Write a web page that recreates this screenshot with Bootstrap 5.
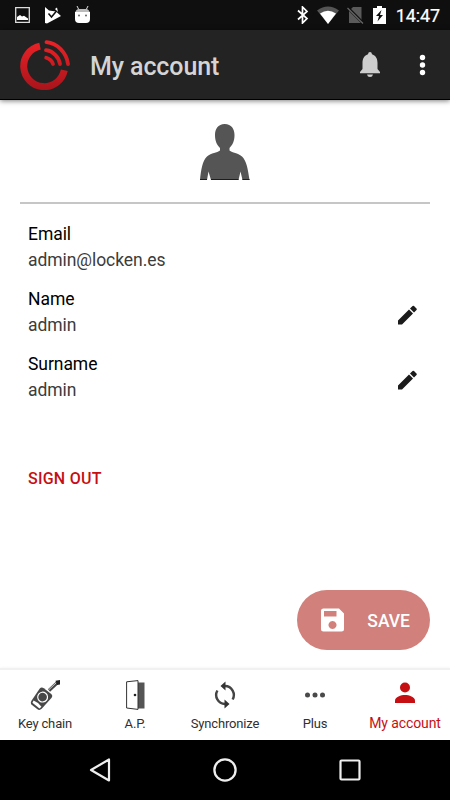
<!DOCTYPE html>
<html lang="en">
<head>
<meta charset="utf-8">
<meta name="viewport" content="width=device-width, initial-scale=1">
<title>My account</title>
<link href="https://cdn.jsdelivr.net/npm/bootstrap@5.3.0/dist/css/bootstrap.min.css" rel="stylesheet">
<style>
body { font-family: Roboto, "Liberation Sans", sans-serif; background: #fff; color: #000; }
svg { display: block; flex: none; }
.screen { width: 450px; height: 800px; }
.statusbar { height: 30px; background: #0f0f0f; padding: 0 10px 0 15px; }
.play-check { margin: 0 14px 0 15px; }
.battery { margin: 0 10px 0 9px; }
.clock { font-size: 18px; line-height: 30px; padding-top: 2px; letter-spacing: -.1px; -webkit-text-stroke: .2px #fff; }
.appbar { height: 70px; background: #232323; border-bottom: 1px solid #000; box-shadow: 0 1px 5px rgba(0,0,0,.5); padding: 0 17px 0 20px; }
.apptitle { font-size: 25px; font-weight: 500; color: #d4d4d4; line-height: 30px; padding-top: 5px; letter-spacing: -.1px; }
.bell { margin-right: 32px; }
.avatar { padding-top: 24px; height: 102px; margin: 0 20px; }
.rule { height: 2px; background: #c6c6c6; margin: 0 20px; }
.fields { padding: 17px 32px 0 28px; }
.field { height: 65px; font-size: 17.5px; line-height: 26px; letter-spacing: -.06px; }
.field:first-child { height: 64.500px; }
.field-value { color: #3c3c3c; }
.pencil { margin-top: 19.500px; }
.signout { font-size: 16px; line-height: 20px; font-weight: 500; color: #c60f13; padding: 0; border: 0; margin: 53px 0 0 28px; background: none; letter-spacing: .25px; }
.save { width: 133px; height: 60px; background: #d1807b; color: #fff; font-size: 17.5px; font-weight: 500; padding: 0 20px 0 23px; margin: 0 20px 18px 0; border: 0; }
.save span { padding-top: 2px; }
.tabs { height: 72px; border-top: 2px solid #f1f1f1; box-shadow: 0 -1px 2px rgba(0,0,0,.03); }
.tab-item { width: 90px; font-size: 13px; line-height: 16px; color: #303030; padding-top: 10px; letter-spacing: -.15px; }
.tab-item svg { margin-bottom: 6px; }
.tab-item.current { color: #c60f13; font-size: 14px; padding-top: 8px; letter-spacing: -.1px; }
.tab-item.current svg { margin-bottom: 7px; }
.sysnav { height: 60px; background: #000; padding: 0 75px; }
</style>
</head>
<body>
<div class="screen d-flex flex-column overflow-hidden">
  <header class="statusbar d-flex align-items-center text-white">
    <svg width="15" height="16" viewBox="0 0 15 16"><path d="M.7.7h13.6v14.6H.7z" fill="none" stroke="#ddd" stroke-width="1.3"/><path d="M2 13v-3l3-2 2 1.600 2-.8 4 2.700V13z" fill="#fff"/></svg>
    <svg class="play-check" width="16" height="17" viewBox="0 0 16 17"><path d="M0 0l4 3.500 7 1 5 4.500L2 16.500 0 16z" fill="#fff"/><path d="M10 2l2-1.500 1 4.500z" fill="#fff"/><path d="M3.500 6.500l3 3.500 5-6" fill="none" stroke="#0f0f0f" stroke-width="1.500"/></svg>
    <svg width="15" height="18" viewBox="0 0 15 18"><path d="M2 0l2 4M13 0l-2 4" stroke="#ddd" stroke-width="1"/><path d="M0 7Q1 3 4 3h7q3 0 4 4z" fill="#bbb"/><path d="M0 6h15v7q0 4-4 4H4q-4 0-4-4z" fill="#fff"/><circle cx="4" cy="9.500" r="1" fill="#666"/><circle cx="11" cy="9.500" r="1" fill="#666"/></svg>
    <div class="d-flex align-items-center ms-auto">
      <svg width="12" height="18" viewBox="0 0 12 18"><path d="M1 4.500l9 8-4.500 4.500V1L10 5.500l-9 8" fill="none" stroke="#fff" stroke-width="1.700"/></svg>
      <svg class="ms-2" width="22" height="18" viewBox="0 0 22 18"><path d="M0 4.500Q11-3.500 22 4.500L11 18z" fill="#555"/><path d="M3 7.500Q11 2 19 7.500L11 18z" fill="#fff"/></svg>
      <svg class="ms-2" width="17" height="18" viewBox="0 0 17 18"><path d="M2 5l4-4h8.500v16H2z" fill="#5a5a5a"/><path d="M-.5.500l17 17" stroke="#0f0f0f" stroke-width="3"/><path d="M.5 2l15.500 15.500" stroke="#666" stroke-width="1.300"/></svg>
      <svg class="battery" width="13" height="18" viewBox="0 0 13 18"><path d="M0 2h4V0h5v2h4v16H0z" fill="#fff"/><path d="M8.500 4L3 10h3l-1.500 5.500L10 9H7z" fill="#0f0f0f"/></svg>
      <span class="clock">14:47</span>
    </div>
  </header>

  <div class="appbar d-flex align-items-center flex-shrink-0">
    <svg width="50" height="50" viewBox="0 0 50 50"><defs><linearGradient id="red" gradientUnits="userSpaceOnUse" x1="0" y1="0" x2="0" y2="50"><stop offset="0" stop-color="#ed2227"/><stop offset="1" stop-color="#a8141b"/></linearGradient></defs><g fill="none" stroke="url(#red)"><path d="M20 6.100A20.500 20.500 0 1 0 44.300 30.300" stroke-width="7"/><g stroke-width="3.800" stroke-linecap="round"><path d="M26.500 2.200C37 3.200 46.500 12.500 48 24"/><path d="M26 10.200C33 11 39 17 40 24"/><path d="M26.200 17.800C29.500 18.800 32 21 33 24"/></g></g></svg>
    <div class="apptitle ms-3 ps-1">My account</div>
    <svg class="bell ms-auto" width="20" height="25" viewBox="0 0 20 25"><path d="M10 0q1.800 0 2 2.200C16.500 3.700 17.500 7.500 17.500 11v6l2.500 3v1.200H0V20l2.500-3v-6C2.500 7.500 3.500 3.700 8 2.200Q8.200 0 10 0zM7 22.500h6Q12.500 25 10 25t-3-2.500z" fill="#cecece"/></svg>
    <svg width="21" height="22" viewBox="0 0 21 22"><g fill="#fff"><circle cx="10.500" cy="3.500" r="2.700"/><circle cx="10.500" cy="11" r="2.700"/><circle cx="10.500" cy="18.500" r="2.700"/></g></svg>
  </div>

  <main class="flex-grow-1 d-flex flex-column">
    <div class="avatar d-flex justify-content-center">
      <svg width="50" height="57" viewBox="0 0 50 57"><path d="M24.700 0C31.500 0 34.500 5 34.500 11c0 6-2 10-5 13v2.500c3 2.500 8 2 12.500 6 4.500 4 6 13 7.500 23.500h-7l-2-8.500-2 8.500H11l-2.500-8.500L7 56H0C1 46 2.500 36.500 7 32.500c4.500-4 10-3.500 13-6V24c-3-3-5-7-5-13C15 5 18 0 24.700 0z" fill="#555"/><path d="M0 55.500h7m4 0h27.500m4 0h7" stroke="#1d1d1d"/></svg>
    </div>
    <div class="rule"></div>
    <div class="fields">
      <div class="field"><div>Email</div><div class="field-value">admin@locken.es</div></div>
      <div class="field d-flex justify-content-between"><div><div>Name</div><div class="field-value">admin</div></div>
        <svg class="pencil" width="20" height="20" viewBox="0 0 20 20"><path d="M0 15.500V19.500h4L15 8.500l-4-4zM12 3.500l4 4 2.500-2.500q.7-.7 0-1.400L16 1q-.7-.7-1.400 0z" fill="#1b1b1b"/></svg></div>
      <div class="field d-flex justify-content-between"><div><div>Surname</div><div class="field-value">admin</div></div>
        <svg class="pencil" width="20" height="20" viewBox="0 0 20 20"><path d="M0 15.500V19.500h4L15 8.500l-4-4zM12 3.500l4 4 2.500-2.500q.7-.7 0-1.400L16 1q-.7-.7-1.400 0z" fill="#1b1b1b"/></svg></div>
    </div>
    <button class="signout align-self-start text-uppercase">Sign out</button>
    <button class="save btn rounded-pill d-flex align-items-center justify-content-between align-self-end mt-auto">
      <svg width="25" height="24" viewBox="-.5 0 25 24"><path fill-rule="evenodd" d="M3 .5h15.500l5 5V21q0 2.500-2.500 2.500H3Q.5 23.500.5 21V3Q.5.500 3 .5zM3.500 3v5.500H16V3zM12 13a4 4 0 1 0 .01 0z" fill="#fff"/></svg>
      <span>SAVE</span>
    </button>
  </main>

  <nav class="tabs d-flex flex-shrink-0">
    <div class="tab-item d-flex flex-column align-items-center">
      <svg width="30" height="30" viewBox="0 0 30 30"><path d="M19 10.500l8-7.500" stroke="#484848" stroke-width="3.200"/><path d="M18.500 10l8-7.500" stroke="#eee" stroke-width=".8"/><path d="M25.500.8l4.500-.8v4.500l-3 .5z" fill="#222"/><g transform="rotate(38 10.500 19)"><path d="M6.500 8.500h9q3 0 3 3l-1 14.500q-.5 3-3 3h-7q-2.500 0-3-3l-1-14.500q0-3 3-3z" fill="#484848"/><circle cx="11" cy="16.200" r="4.900" fill="#484848" stroke="#fff" stroke-width="1.200"/><path d="M6 24.500q5-1.500 10 0l-.5 2.500h-9z" fill="#fff"/></g></svg>
      <span>Key chain</span>
    </div>
    <div class="tab-item d-flex flex-column align-items-center">
      <svg width="19" height="30" viewBox="0 0 19 30"><path d="M11 2.500h7.500v26H11z" fill="#555"/><path d="M.6 1.800L12 .6v28.800L.6 28z" fill="#fff" stroke="#333"/><circle cx="9" cy="15" r="1.300" fill="#222"/></svg>
      <span>A.P.</span>
    </div>
    <div class="tab-item d-flex flex-column align-items-center">
      <svg width="30" height="30" viewBox="0 0 30 30"><g fill="none" stroke="#444" stroke-width="2.400"><path d="M14 6h1a9 9 0 0 1 7.600 13.500"/><path d="M16 24h-1A9 9 0 0 1 7.400 10.500"/></g><path d="M15.500 1.500v9L10.500 6zM14.500 19.500v9l5-4.500z" fill="#333"/></svg>
      <span>Synchronize</span>
    </div>
    <div class="tab-item d-flex flex-column align-items-center">
      <svg width="30" height="30" viewBox="0 0 30 30"><g fill="#4a4a4a"><circle cx="7.500" cy="15" r="2.500"/><circle cx="15" cy="15" r="2.500"/><circle cx="22.500" cy="15" r="2.500"/></g></svg>
      <span>Plus</span>
    </div>
    <div class="tab-item current d-flex flex-column align-items-center">
      <svg width="30" height="30" viewBox="0 0 30 30"><g fill="#c60f13"><circle cx="15" cy="9.500" r="5"/><path d="M5 25v-2.500C5 19 11 17 15 17s10 2 10 5.500V25z"/></g></svg>
      <span>My account</span>
    </div>
  </nav>

  <footer class="sysnav d-flex align-items-center justify-content-between flex-shrink-0">
    <svg width="50" height="30" viewBox="0 0 50 30"><path d="M34 4.500v21L16 15z" fill="none" stroke="#eee" stroke-width="2.200" stroke-linejoin="round"/></svg>
    <svg width="50" height="30" viewBox="0 0 50 30"><circle cx="25" cy="15" r="10.600" fill="none" stroke="#eee" stroke-width="2.300"/></svg>
    <svg width="50" height="30" viewBox="0 0 50 30"><rect x="15.500" y="5.500" width="19" height="19" rx="1" fill="none" stroke="#eee" stroke-width="2.200"/></svg>
  </footer>
</div>
<script src="https://cdn.jsdelivr.net/npm/bootstrap@5.3.0/dist/js/bootstrap.bundle.min.js"></script>
</body>
</html>
